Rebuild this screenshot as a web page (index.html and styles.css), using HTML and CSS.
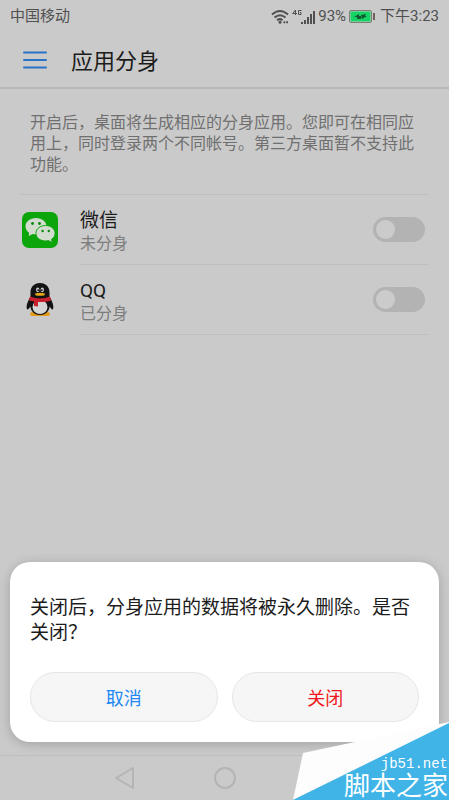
FILE: index.html
```html
<!DOCTYPE html>
<html lang="zh-CN">

<head>
    <meta charset="UTF-8">
    <meta name="viewport" content="width=device-width, initial-scale=1.0">
    <title>应用分身</title>
    <link rel="stylesheet" href="styles.css">
</head>

<body>
    <div class="status-bar">
        <span>中国移动</span>
        <div class="status-right">
            <svg class="wifi" width="18" height="15" viewBox="0 0 18 15">
                <path d="M1 5.500Q9-1.500 17 5.500M3.500 8.500Q9 4 14.500 8.500M6 11.300Q9 9 11.500 11.300" />
                <circle cx="9" cy="13.300" r="1.500" />
                <path d="M12.500 13.300h1.800M15.200 13.300h1.800" />
            </svg>
            <svg class="signal" width="24" height="15" viewBox="0 0 24 15">
                <path class="net" d="M3.500 6V1L.7 4.500H5M9.500 1.500H6.500V5.500H9V3.500H8" />
                <path d="M9 13h2v2H9zM12 11h2v4h-2zM15 8h2v7h-2zM18 5h2v10h-2zM21 2h2v13h-2z" />
            </svg>
            <span>93%</span>
            <svg class="battery" width="26" height="13" viewBox="0 0 26 13">
                <rect class="shell" x=".5" y=".5" width="22" height="12" rx="1.500" />
                <rect class="level" x="1.500" y="1.500" width="20" height="10" />
                <path d="M24 3h2v7h-2z" />
                <path class="bolt" d="M5 7l5-3v2h2v3L8 9V7zM12 5l5-1-1 2h2l-5 3z" />
            </svg>
            <span>下午3:23</span>
        </div>
    </div>

    <header class="header">
        <button class="menu" type="button" aria-label="菜单">
            <svg width="24" height="20" viewBox="0 0 24 20">
                <path d="M1 2.500h22M1 10h22M1 17.500h22" />
            </svg>
        </button>
        <h1>应用分身</h1>
    </header>

    <main class="content">
        <p class="intro">开启后，桌面将生成相应的分身应用。您即可在相同应用上，同时登录两个不同帐号。第三方桌面暂不支持此功能。</p>

        <div class="app-list">
            <div class="app">
                <svg class="app-icon" width="40" height="40" viewBox="0 0 40 40">
                    <rect x="2" y="2" width="36" height="36" rx="7" fill="#0ca50c" />
                    <path fill="#d2dccf" d="M16 8C10 8 5.500 11.700 5.500 16.300c0 2.700 1.400 4.900 3.600 6.400L8.700 26l4-2c1.100.3 2.200.5 3.300.5 6 0 10.500-3.700 10.500-8.200S22 8 16 8z" />
                    <path fill="#d2dccf" stroke="#0ca50c" d="M25.600 15.500c-5.400 0-9.700 3.400-9.700 7.800s4.300 7.700 9.700 7.700c1 0 2-.2 2.900-.4l3.900 2.200-.9-3.400c2.200-1.400 3.600-3.600 3.600-6.100 0-4.400-4.200-7.800-9.500-7.800z" />
                    <g fill="#0c850c">
                        <circle cx="12.500" cy="13.500" r="1.400" />
                        <circle cx="19.500" cy="13.500" r="1.400" />
                        <circle cx="22.600" cy="21" r="1.200" />
                        <circle cx="28.800" cy="21" r="1.200" />
                    </g>
                </svg>
                <label class="app-text" for="wechat">
                    <span class="app-name">微信</span>
                    <span class="app-state">未分身</span>
                </label>
                <input class="switch" type="checkbox" id="wechat">
            </div>
            <div class="app">
                <svg class="app-icon" width="40" height="40" viewBox="0 0 40 40">
                    <path fill="#e39a16" d="M10 34c1-3 8-3 10-1 2-2 9-2 10 1 .5 2-3 2-7 2h-6c-4 0-7.500 0-7-2z" />
                    <path fill="#111315" d="M20 3c-6.200 0-9.500 4.300-9.500 9.500v4C8.500 20 6 25 6.800 28.500c.7 2.500 2.300 0 3.600-2C11 32 15 35 20 35s9-3 9.600-8.500c1.300 2 2.900 4.500 3.600 2 .8-3.500-1.700-8.500-3.700-12v-4C29.500 7.300 26.200 3 20 3z" />
                    <ellipse cx="20" cy="27" rx="7.500" ry="7" fill="#d5d5d5" />
                    <ellipse cx="17.700" cy="9.800" rx="1.700" ry="2.400" fill="#c8c8c8" />
                    <ellipse cx="22.300" cy="9.800" rx="1.700" ry="2.400" fill="#c8c8c8" />
                    <circle cx="18.200" cy="10.200" r=".9" fill="#111315" />
                    <circle cx="21.800" cy="10.200" r=".9" fill="#111315" />
                    <ellipse cx="20" cy="14.300" rx="5" ry="1.500" fill="#e5a61c" />
                    <path fill="#c8202d" d="M10 16.500c6 2.500 14 2.500 20 0l1 4c-4 1.300-8 1.700-13 1.500V26.500l-4-.5V21.500l-5-1z" />
                </svg>
                <label class="app-text" for="qq">
                    <span class="app-name">QQ</span>
                    <span class="app-state">已分身</span>
                </label>
                <input class="switch" type="checkbox" id="qq">
            </div>
        </div>
    </main>

    <nav class="nav-bar">
        <button type="button" aria-label="返回">
            <svg width="24" height="24" viewBox="0 0 24 24">
                <path d="M3 12L20 2v20z" />
            </svg>
        </button>
        <button type="button" aria-label="主屏幕">
            <svg width="24" height="24" viewBox="0 0 24 24">
                <circle cx="12" cy="12" r="10" />
            </svg>
        </button>
    </nav>

    <div class="dialog" role="dialog" aria-labelledby="message">
        <p id="message">关闭后，分身应用的数据将被永久删除。是否关闭？</p>
        <div class="actions">
            <button class="cancel" type="button">取消</button>
            <button class="close" type="button">关闭</button>
        </div>
    </div>

    <div class="watermark">
        <svg width="156" height="78" viewBox="0 0 156 78">
            <path fill="#fdfdfd" d="M10 31L156 0v2L0 78z" />
            <path fill="#40b4e7" d="M156 1v77H0z" />
        </svg>
        <div class="watermark-text">
            <span class="site">jb51.net</span>
            <span class="site-name">脚本之家</span>
        </div>
    </div>
</body>

</html>
```

FILE: styles.css
```css
* {
    box-sizing: border-box;
}

body {
    position: relative;
    display: flex;
    flex-direction: column;
    min-height: 100vh;
    margin: 0;
    background: #cacaca;
    color: #1c1c1c;
    font-family: Roboto, "Noto Sans CJK SC", sans-serif;
}

button {
    padding: 0;
    border: none;
    background: none;
    font-family: inherit;
}

svg {
    display: block;
}

/* status bar */
.status-bar {
    display: flex;
    align-items: center;
    justify-content: space-between;
    height: 32px;
    padding: 0 10px;
    color: #505050;
    font-size: 15px;
    line-height: 32px;
}

.status-right {
    display: flex;
    align-items: center;
    gap: 3px;
}

.wifi {
    fill: #505050;
}

.wifi path {
    fill: none;
    stroke: #505050;
    stroke-width: 2;
}

.signal {
    margin-right: -1px;
    fill: #505050;
}

.signal .net {
    fill: none;
    stroke: #505050;
}

.battery {
    margin-right: 2px;
    fill: #6b625c;
}

.battery .shell {
    fill: none;
    stroke: #7d7d75;
}

.battery .level {
    fill: #14d465;
}

.battery .bolt {
    fill: #12572f;
}

/* title */
.header {
    display: flex;
    align-items: center;
    gap: 24px;
    height: 57px;
    padding: 0 23px;
    border-bottom: 2px solid #b7b7b7;
}

.menu path {
    stroke: #2873c9;
    stroke-width: 2;
    stroke-linecap: round;
}

h1 {
    margin: 0;
    padding-top: 4px;
    font-size: 22px;
    font-weight: 400;
    line-height: 32px;
}

/* list */
.content {
    flex: 1;
    padding: 23px 20px 0;
}

.intro {
    margin: 0;
    padding: 0 10px 19px;
    color: #707070;
    font-size: 16px;
    line-height: 21px;
}

.app-list {
    border-top: 1px solid #bebebe;
}

.app {
    display: grid;
    grid-template-columns: 40px 1fr 52px;
    column-gap: 20px;
    align-items: center;
    padding-right: 4px;
}

.app-text {
    display: flex;
    flex-direction: column;
    padding: 13px 0 9px;
}

.app-name {
    font-size: 19px;
    line-height: 25px;
}

.app-state {
    color: #7d7d7d;
    font-size: 16px;
    line-height: 22px;
}

.app::after {
    content: "";
    grid-column: 2 / 4;
    height: 1px;
    margin-right: -4px;
    background: #bebebe;
}

.switch {
    appearance: none;
    width: 52px;
    height: 25px;
    margin: 0;
    padding: 3px;
    border-radius: 13px;
    background: #b3b3b3;
}

.switch::before {
    content: "";
    display: block;
    width: 19px;
    height: 19px;
    border-radius: 50%;
    background: #cbcbcb;
}

.switch:checked::before {
    margin-left: auto;
}

/* navigation keys */
.nav-bar {
    display: grid;
    grid-template-columns: repeat(3, 100px);
    justify-content: center;
    height: 45px;
    border-top: 1px solid #bdbdbd;
}

.nav-bar button {
    display: grid;
    place-items: center;
}

.nav-bar svg {
    fill: none;
    stroke: #b4b4b4;
    stroke-width: 2;
    stroke-linejoin: round;
}

/* dialog */
.dialog {
    position: absolute;
    right: 10px;
    bottom: 58px;
    left: 10px;
    padding: 33px 20px 20px;
    border-radius: 20px;
    background: #fff;
    box-shadow: 0 2px 12px rgba(0, 0, 0, 0.2);
}

.dialog p {
    margin: 0 0 27px;
    font-size: 19px;
    line-height: 25px;
}

.actions {
    display: grid;
    grid-template-columns: 1fr 1fr;
    gap: 14px;
}

.actions button {
    height: 50px;
    border: 1px solid #e6e6e6;
    border-radius: 25px;
    background: #f6f6f6;
    font-size: 18px;
}

.actions .cancel {
    color: #2288f5;
}

.actions .close {
    color: #f01820;
}

/* watermark */
.watermark {
    position: absolute;
    right: 0;
    bottom: 0;
}

.watermark-text {
    position: absolute;
    right: 1px;
    bottom: 0;
    display: flex;
    flex-direction: column;
    align-items: flex-end;
    color: #fff;
    white-space: nowrap;
}

.site {
    font-family: "Liberation Mono", monospace;
    font-size: 14px;
    line-height: 16px;
}

.site-name {
    font-size: 26px;
    line-height: 28px;
}
```
